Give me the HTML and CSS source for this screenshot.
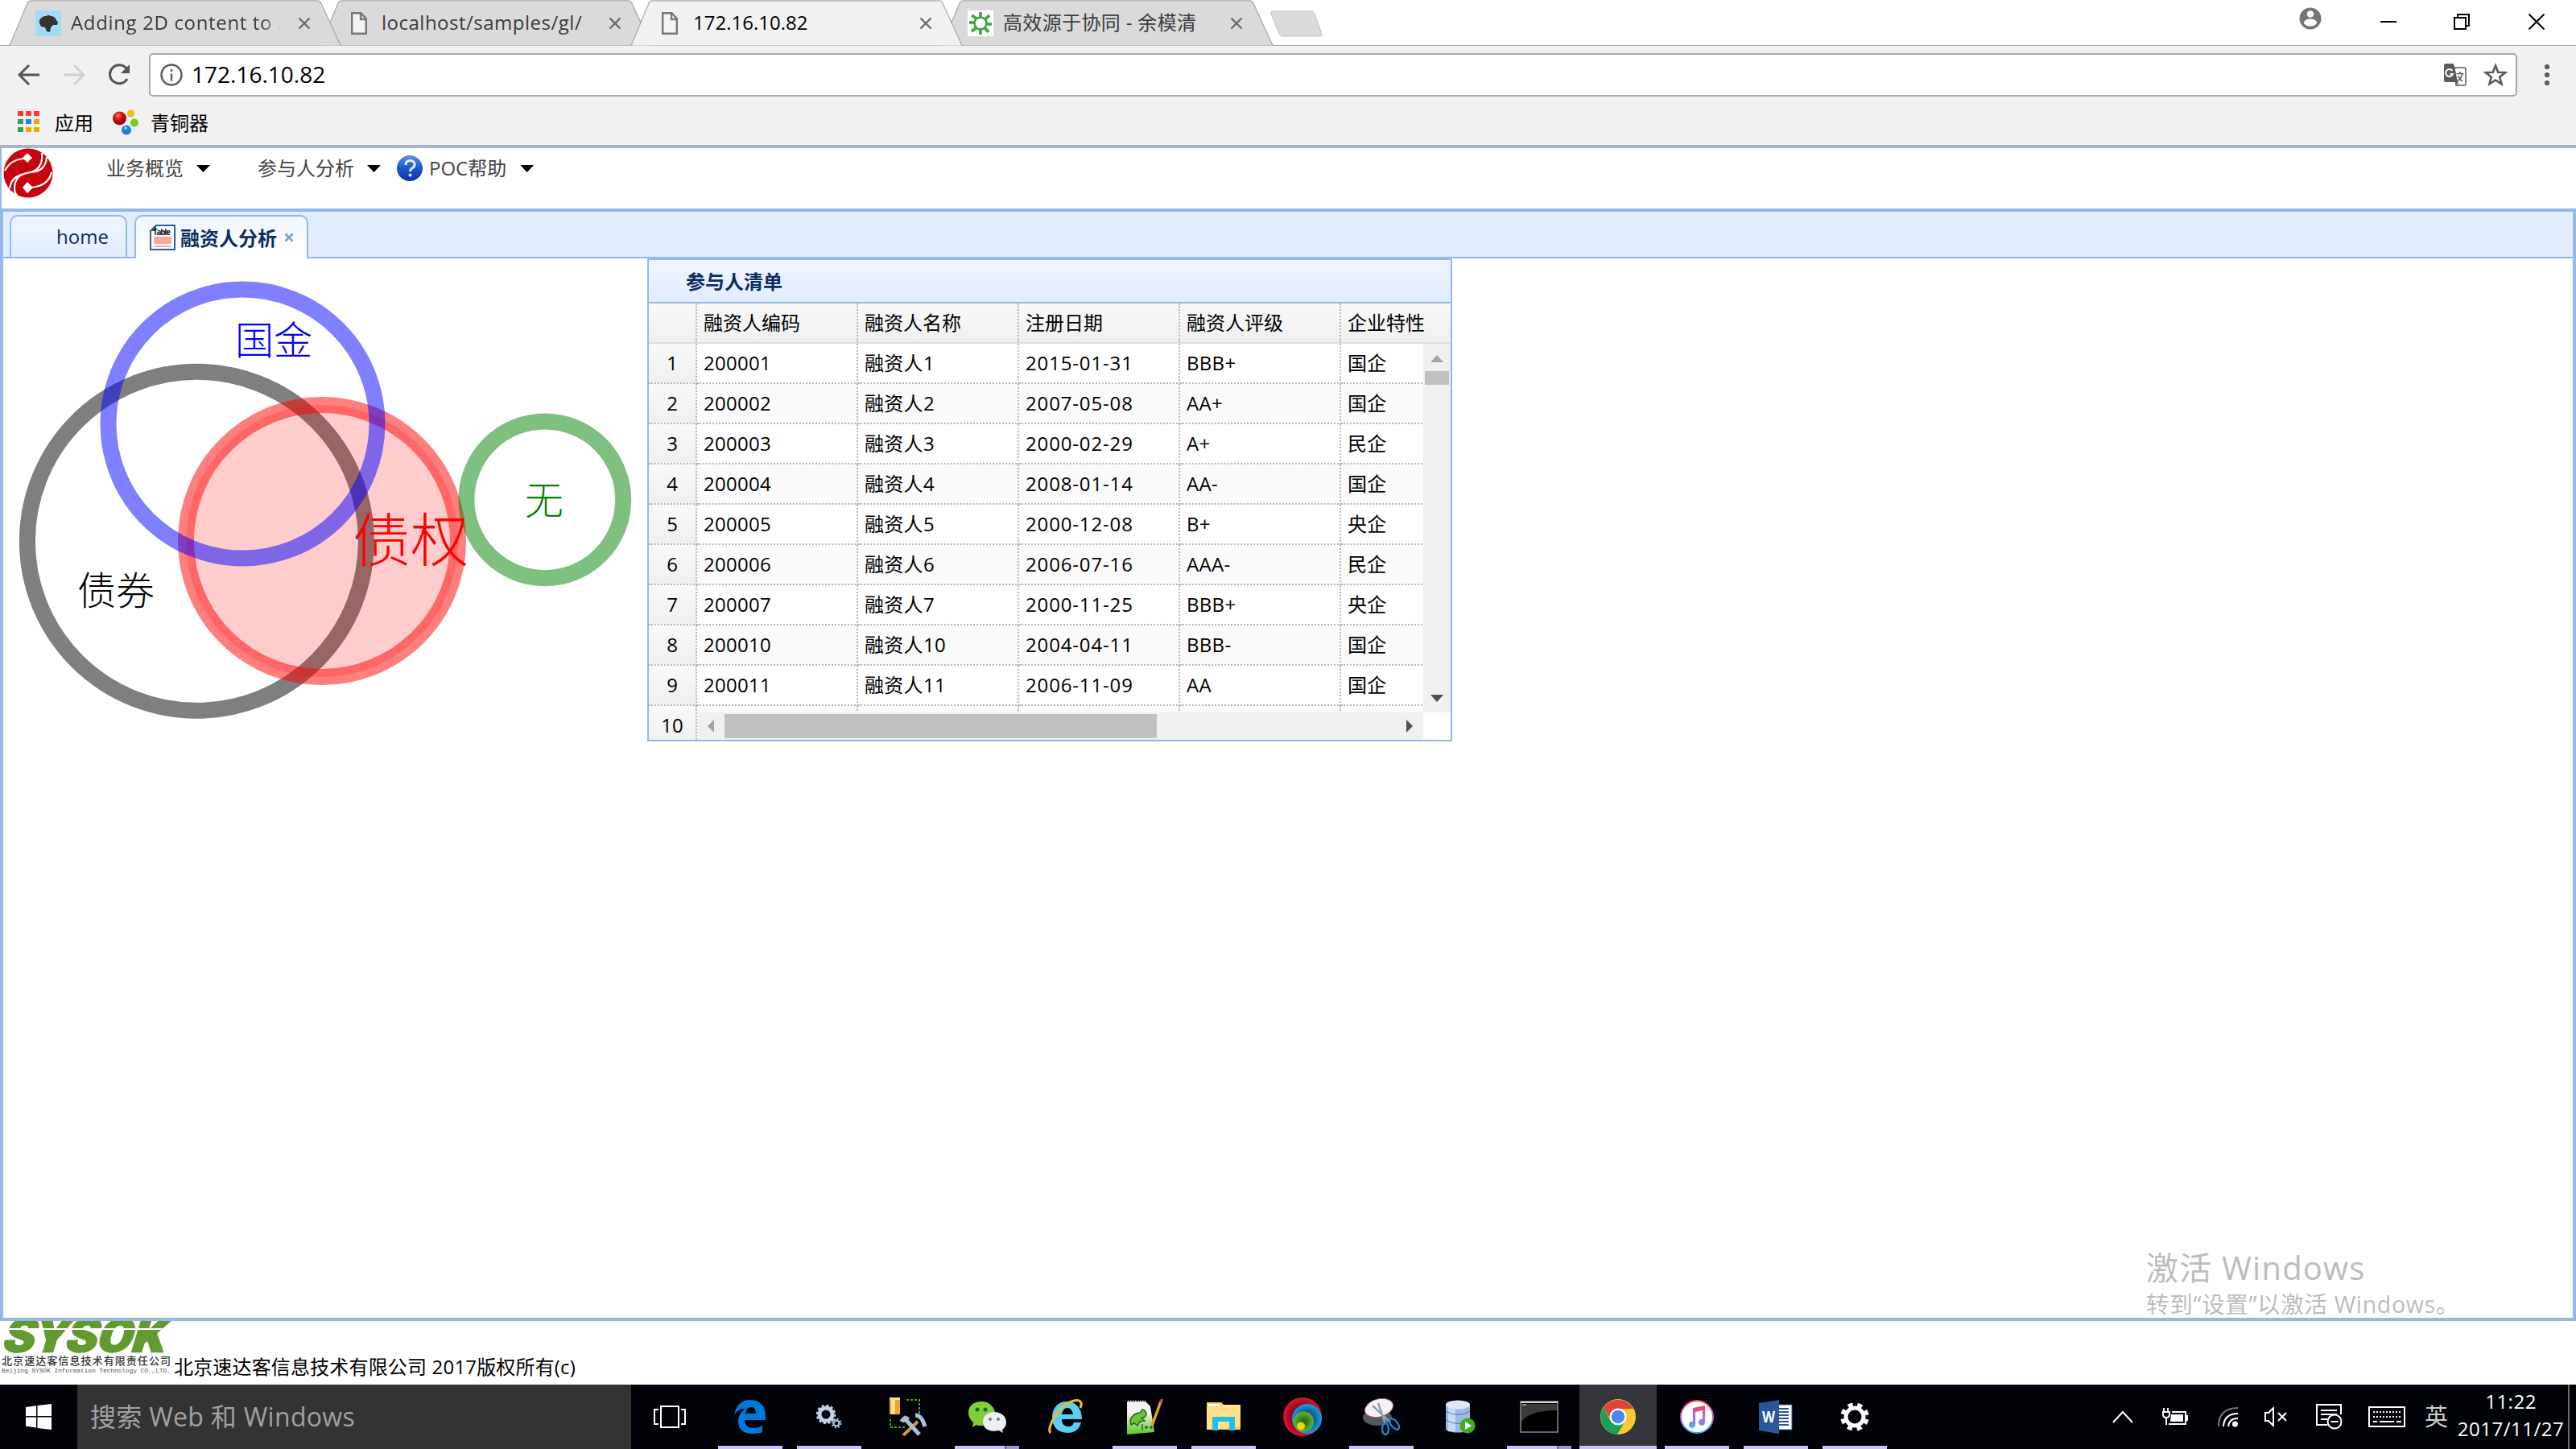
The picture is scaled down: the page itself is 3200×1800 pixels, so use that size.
FILE: index.html
```html
<!DOCTYPE html>
<html lang="zh-CN">
<head>
<meta charset="utf-8">
<title>172.16.10.82</title>
<link rel="stylesheet" href="styles.css">
</head>
<body>
<div class="screen">

<header class="browser">
  <div class="tabstrip">
    <div class="btab t1">
      <svg class="shape" viewBox="0 0 413 57"><path d="M0 56.500Q2 56 3 52L23 4Q24 .8 28 .8H383Q387 .8 388 4L410 52Q411 56 413 56.500"/></svg>
      <svg class="fav" viewBox="0 0 32 32"><path fill="#a3dbf5" d="M0 0h32v32H0z"/><path fill="#333" d="M5 12q3-5 8-5 3-2 6 0 5 0 7 5l2 3-1 3-5 0-3 3-1 6-4-1-2-5-5-1-2-4z"/></svg>
      <span class="bt fade">Adding 2D content to a</span>
      <svg class="x" viewBox="0 0 16 16"><path d="M1.500 1.500l13 13m0-13l-13 13"/></svg>
    </div>
    <div class="btab t2">
      <svg class="shape" viewBox="0 0 413 57"><path d="M0 56.500Q2 56 3 52L23 4Q24 .8 28 .8H383Q387 .8 388 4L410 52Q411 56 413 56.500"/></svg>
      <svg class="fav page" viewBox="0 0 20 28"><path d="M1.200 1.200h11.300l6.300 7v18.600H1.200zM12 1v8h7"/></svg>
      <span class="bt">localhost/samples/gl/</span>
      <svg class="x" viewBox="0 0 16 16"><path d="M1.500 1.500l13 13m0-13l-13 13"/></svg>
    </div>
    <div class="btab t3">
      <svg class="shape" viewBox="0 0 413 57"><path d="M0 56.500Q2 56 3 52L23 4Q24 .8 28 .8H383Q387 .8 388 4L410 52Q411 56 413 56.500"/></svg>
      <svg class="fav page" viewBox="0 0 20 28"><path d="M1.200 1.200h11.300l6.300 7v18.600H1.200zM12 1v8h7"/></svg>
      <span class="bt">172.16.10.82</span>
      <svg class="x" viewBox="0 0 16 16"><path d="M1.500 1.500l13 13m0-13l-13 13"/></svg>
    </div>
    <div class="btab t4">
      <svg class="shape" viewBox="0 0 413 57"><path d="M0 56.500Q2 56 3 52L23 4Q24 .8 28 .8H383Q387 .8 388 4L410 52Q411 56 413 56.500"/></svg>
      <svg class="fav" viewBox="0 0 32 32"><path fill="#fff" d="M0 0h32v32H0z"/><g stroke="#3aa637" stroke-width="3.600" fill="none"><circle cx="16" cy="16" r="7.500" stroke-width="2.500"/><path d="M16 10V2m5 10l6-6m-5 11h8m-9 4l5 6m-10-5v8m-5-9l-6 5m5-11H2m9-5L5 6"/></g></svg>
      <span class="bt">高效源于协同 - 余模清</span>
      <svg class="x" viewBox="0 0 16 16"><path d="M1.500 1.500l13 13m0-13l-13 13"/></svg>
    </div>
    <svg class="newtab" viewBox="0 0 68 34"><path d="M3 1h49q3 0 4 3l9 25q1 3-2 3H17q-4 0-5-3L2 4Q1 1 3 1z"/></svg>
    <div class="winbtns">
      <svg class="user" viewBox="0 0 28 28"><circle cx="14" cy="14" r="13.500" fill="#757575"/><circle cx="14" cy="8.500" r="4.200" fill="#fff"/><ellipse cx="14" cy="19" rx="8" ry="4.500" fill="#fff"/></svg>
      <svg class="min" viewBox="0 0 20 20"><path d="M0 10h20"/></svg>
      <svg class="max" viewBox="0 0 20 20"><path d="M1 5h14v14H1zM5 5V1h14v14h-4"/></svg>
      <svg class="cls" viewBox="0 0 20 20"><path d="M.5.5l19 19m0-19l-19 19"/></svg>
    </div>
  </div>
  <div class="toolbar">
    <svg class="nav" viewBox="0 0 28 28"><path d="M27 14H3M14 2L2 14l12 12"/></svg>
    <svg class="nav off" viewBox="0 0 28 28"><path d="M1 14h24M14 2l12 12-12 12"/></svg>
    <svg class="nav" viewBox="0 0 28 28"><path d="M24 19a11.500 11.500 0 1 1-1-13"/><path d="M27 1v11H16z" stroke="none" fill="#555"/></svg>
    <div class="url">
      <svg class="info" viewBox="0 0 28 28"><circle cx="14" cy="14" r="12.500"/><path d="M14 12.500v9M14 7v3"/></svg>
      <span>172.16.10.82</span>
      <svg class="trans" viewBox="0 0 28 28"><path fill="#fff" stroke="#5a5a5a" stroke-width="1.500" d="M13 5h12q2 0 2 2v18q0 2-2 2H15z"/><path fill="#5a5a5a" d="M2 0h9q1 0 1.500 1.500L18 27l-4-4H2q-2 0-2-2V2Q0 0 2 0z"/><path d="M10.500 9A4.500 4.500 0 1 0 11 13H7.500" fill="none" stroke="#fff" stroke-width="2"/><path d="M15.500 12.500h9M20 10v2.500m3 0q-1 5-6.500 9.500m1-7q2 5 5.500 7" fill="none" stroke="#5a5a5a" stroke-width="1.500"/></svg>
      <svg class="star" viewBox="0 0 30 30"><path d="M15 3.500l3.200 8.200 8.800.5-6.800 5.500 2.300 8.600-7.500-4.800-7.500 4.800 2.300-8.600L3 12.200l8.800-.5z"/></svg>
    </div>
    <svg class="dots" viewBox="0 0 8 28"><circle cx="4" cy="4" r="3.100"/><circle cx="4" cy="14" r="3.100"/><circle cx="4" cy="24" r="3.100"/></svg>
  </div>
  <div class="bookmarks">
    <svg class="apps" viewBox="0 0 27 27"><path fill="#f93b36" d="M0 0h7v6H0zM10 0h7v6h-7zM20 0h7v6h-7z"/><path fill="#2fa15b" d="M0 10h7v6H0zM0 20h7v6H0z"/><path fill="#1985f5" d="M10 10h7v6h-7z"/><path fill="#f3a402" d="M20 10h7v6h-7zM10 20h7v6h-7zM20 20h7v6h-7z"/></svg>
    <span>应用</span>
    <svg class="balls" viewBox="0 0 32 32"><defs><radialGradient id="br" cx=".4" cy=".3"><stop offset="0" stop-color="#ff8f80"/><stop offset=".5" stop-color="#e01818"/><stop offset="1" stop-color="#a00808"/></radialGradient></defs><circle cx="8.500" cy="11" r="8.500" fill="url(#br)"/><circle cx="22.500" cy="5" r="4.700" fill="#e8c51c"/><circle cx="27" cy="16.500" r="5" fill="#76c91c"/><circle cx="17" cy="25.500" r="6" fill="#1b7de0"/><circle cx="16" cy="23" r="2" fill="#8cc8ff"/></svg>
    <span>青铜器</span>
  </div>
</header>

<main class="app">
  <nav class="menu">
    <svg class="logo" viewBox="0 0 62 62"><circle cx="31" cy="31" r="30.500" fill="#c60410"/><g fill="none" stroke="#fff" stroke-width="2.200"><path d="M2 28Q10 13 28 13M8 50C10 36 20 33 30 31S50 24 48 6M60 30Q56 48 32 49M54 11C53 26 44 29 34 30S14 36 14 50Q14 56 18 60"/></g><path fill="#fff" d="M30 6l6 6-6 6-6-6zM30 42l7 7-7 7-6-7z"/></svg>
    <span class="mi m1">业务概览</span><i class="dn"></i>
    <span class="mi m2">参与人分析</span><i class="dn"></i>
    <svg class="help" viewBox="0 0 32 32"><defs><linearGradient id="hb" x2="0" y2="1"><stop offset="0" stop-color="#5b93e8"/><stop offset=".5" stop-color="#1c55cc"/><stop offset="1" stop-color="#0b37a0"/></linearGradient></defs><circle cx="16" cy="16" r="16" fill="url(#hb)"/><path d="M11 12q0-5.500 5.500-5.500T22 11.500q0 3-3 4.500-2.500 1.500-2.500 4" fill="none" stroke="#dfe9ff" stroke-width="3"/><circle cx="16.500" cy="24.500" r="2" fill="#dfe9ff"/></svg>
    <span class="mi">POC帮助</span><i class="dn"></i>
  </nav>

  <div class="tabs">
    <div class="tab"><span>home</span></div>
    <div class="tab on">
      <svg class="ticon" viewBox="0 0 32 32"><path fill="#fff" stroke="#27639a" stroke-width="2" d="M8 1h23v30H1V8z"/><path fill="#27639a" d="M1 8l7-7v7z"/><text x="4" y="13" textLength="22" font-size="10" font-weight="700" fill="#222">Table</text><path fill="#fba5a5" d="M5 15h22v9H5zM5 26h22v2H5z"/></svg>
      <span>融资人分析</span>
      <svg class="tx" viewBox="0 0 12 12"><path d="M1.500 1.500l9 9m0-9l-9 9"/></svg>
    </div>
  </div>

  <div class="content">
    <svg class="venn" viewBox="0 0 800 600">
      <g fill="none" stroke-width="20" stroke-opacity=".5">
        <circle cx="240.400" cy="351.300" r="210.500" stroke="#000"/>
        <circle cx="396" cy="351" r="169" stroke="red" fill="red" fill-opacity=".2"/>
        <circle cx="297.500" cy="205.500" r="167" stroke="#00f"/>
        <circle cx="672.800" cy="299.800" r="97.400" stroke="green"/>
      </g>
      <text x="288" y="119" font-size="48" fill="#00f">国金</text>
      <text x="92" y="430" font-size="48" fill="#000">债券</text>
      <text x="434" y="376" font-size="72" fill="red">债权</text>
      <text x="648" y="318" font-size="48" fill="green">无</text>
    </svg>

    <section class="panel">
      <h2>参与人清单</h2>
      <div class="row head"><b></b><span>融资人编码</span><span>融资人名称</span><span>注册日期</span><span>融资人评级</span><span>企业特性</span></div>
      <div class="grid">
        <div class="nums"><b>1</b><b>2</b><b>3</b><b>4</b><b>5</b><b>6</b><b>7</b><b>8</b><b>9</b><b>10</b></div>
        <div class="view">
          <div class="rows">
            <div class="row"><span>200001</span><span>融资人1</span><span>2015-01-31</span><span>BBB+</span><span>国企</span></div>
            <div class="row"><span>200002</span><span>融资人2</span><span>2007-05-08</span><span>AA+</span><span>国企</span></div>
            <div class="row"><span>200003</span><span>融资人3</span><span>2000-02-29</span><span>A+</span><span>民企</span></div>
            <div class="row"><span>200004</span><span>融资人4</span><span>2008-01-14</span><span>AA-</span><span>国企</span></div>
            <div class="row"><span>200005</span><span>融资人5</span><span>2000-12-08</span><span>B+</span><span>央企</span></div>
            <div class="row"><span>200006</span><span>融资人6</span><span>2006-07-16</span><span>AAA-</span><span>民企</span></div>
            <div class="row"><span>200007</span><span>融资人7</span><span>2000-11-25</span><span>BBB+</span><span>央企</span></div>
            <div class="row"><span>200010</span><span>融资人10</span><span>2004-04-11</span><span>BBB-</span><span>国企</span></div>
            <div class="row"><span>200011</span><span>融资人11</span><span>2006-11-09</span><span>AA</span><span>国企</span></div>
            <div class="row"><span></span><span></span><span></span><span></span><span></span></div>
          </div>
          <div class="hbar"><i class="al"></i><div class="hthumb"></div><i class="ar"></i></div>
        </div>
        <div class="vbar"><i class="au"></i><div class="vthumb"></div><i class="ad"></i></div>
      </div>
    </section>

    <div class="watermark"><p class="w1">激活 Windows</p><p class="w2">转到“设置”以激活 Windows。</p></div>
  </div>

  <footer class="foot">
    <svg class="sysok" viewBox="0 0 214 79">
      <g transform="translate(1 38) skewX(-17)"><text x="0" y="0" textLength="200" lengthAdjust="spacingAndGlyphs" font-size="57" font-weight="900" fill="#639a2f" stroke="#639a2f" stroke-width="2.500" class="brand">SYSOK</text></g>
      <path d="M0 10h214" stroke="#fff" stroke-width="2"/>
      <text x="2" y="54" font-size="13" font-weight="500" textLength="210" fill="#333">北京速达客信息技术有限责任公司</text>
      <text x="2" y="64" font-size="8" textLength="210" fill="#555" class="mono">Beijing SYSOK Information Technology CO.,LTD.</text>
    </svg>
    <span>北京速达客信息技术有限公司 2017版权所有(c)</span>
  </footer>
</main>

<div class="taskbar">
  <div class="start"><svg viewBox="0 0 32 32"><path fill="#fff" d="M0 4l13-1.800V15H0zM14.500 2L32 0v15H14.500zM0 16.500h13v13L0 27.500zM14.500 16.500H32V32l-17.500-2z"/></svg></div>
  <div class="search">搜索 Web 和 Windows</div>
  <div class="apps-row">
    <div class="tb tv"><svg width="40" height="28" viewBox="0 0 40 28" fill="none" stroke="#fff" stroke-width="2"><path d="M9 1h22v26H9zM6 5H1v18h5M34 5h5v18h-5"/></svg></div>
    <div class="tb run"><svg width="40" height="42" viewBox="0 0 40 42"><path fill="#0078d7" d="M0 19C2 7 9 0 20 0c13 0 19 9 19 19v6H13c0 7 5 10 11 10 4 0 8-1 11-3v8c-4 2-8 2-13 2C11 42 5 36 5 27c0-7 3-12 9-16C7 11 3 14 0 19zM14 17h13c0-5-2-8-6-8s-6 3-7 8z"/></svg></div>
    <div class="tb run"><svg width="32" height="30" viewBox="0 0 32 30" fill="none"><circle cx="12" cy="12" r="8" stroke="#c3d3e6" stroke-width="5"/><circle cx="12" cy="12" r="11" stroke="#c3d3e6" stroke-width="2.500" stroke-dasharray="3 2.760"/><circle cx="25" cy="23" r="3.500" stroke="#a8bdd6" stroke-width="2.500"/><circle cx="25" cy="23" r="5.500" stroke="#a8bdd6" stroke-width="2" stroke-dasharray="2 2.320"/></svg></div>
    <div class="tb"><svg width="48" height="48" viewBox="0 0 48 48" fill="none"><path fill="#e8a92c" d="M1 1h13v20H1z"/><path fill="#fde08a" d="M3 1h5v20H3zM1 0h13v3H1z"/><path d="M22 3h16v18M2 27v10h18" stroke="#3fa535" stroke-width="2" stroke-dasharray="3 2"/><path d="M36 30L18 47" stroke="#d99a2b" stroke-width="4"/><path d="M18 24l20 22" stroke="#aebfd6" stroke-width="5"/><path d="M15 27q5 4 9-3M33 22q8 0 12 14" stroke="#aebfd6" stroke-width="5"/></svg></div>
    <div class="tb run multi"><svg width="48" height="40" viewBox="0 0 48 40"><path fill="#7ecf38" d="M7 27C-3 19-1 1 17 1c11 0 17 8 17 15 0 9-7 15-17 15-3 0-4 0-6-1l-5 3z"/><circle cx="12" cy="11" r="2.500" fill="#1c6b18"/><circle cx="22" cy="11" r="2.500" fill="#1c6b18"/><path fill="#eef0f0" d="M33 14c8 0 15 5 15 13 0 4-2 7-5 9l1 4-5-3c-13 3-20-3-20-11 0-7 6-12 14-12z"/><circle cx="28" cy="23" r="2" fill="#777"/><circle cx="38" cy="23" r="2" fill="#777"/></svg></div>
    <div class="tb"><svg width="44" height="44" viewBox="0 0 44 44"><path fill="#5cd0f2" d="M5 23C5 11 12 3 23 3s19 8 19 22H17c0 6 3 9 8 9 4 0 6-2 7-5h9c-2 8-8 13-16 13C12 42 5 34 5 23zm12-4h14c-1-5-3-8-7-8s-6 3-7 8z"/><path d="M3 42C-3 36 14 6 32 2c8-2 11 2 8 9" fill="none" stroke="#f4b92c" stroke-width="3"/></svg></div>
    <div class="tb run"><svg width="48" height="44" viewBox="0 0 48 44"><defs><linearGradient id="np" x2="0" y2="1"><stop offset=".35" stop-color="#f2f2ee"/><stop offset="1" stop-color="#54c81e"/></linearGradient></defs><path fill="url(#np)" d="M2 3h23l6 6 5 32-34 3z"/><path d="M3 2h22" stroke="#777" stroke-width="2" stroke-dasharray="1.500 1.500"/><path fill="#6cc23a" stroke="#25661a" stroke-width="1.500" d="M6 26q4-9 12-9l3-4q5 1 5 6-1 4-6 5l4 3-6 1-3 5-4-3-4 2z"/><path fill="none" stroke="#25661a" stroke-width="1.500" d="M21 31v8m3-4h4m-2-2v4m4-2h4m-2-2v4"/><path d="M44 3L33 33" stroke="#e9a21f" stroke-width="3.500"/><path d="M45.500 0L44 5" stroke="#c84a3a" stroke-width="3.500"/></svg></div>
    <div class="tb run"><svg width="42" height="36" viewBox="0 0 42 36"><path fill="#f8cf57" d="M0 0h18l3 3h21v31H0z"/><path fill="#ffe08a" d="M0 6h16l3-3h23v27L0 34z"/><path fill="#fff" d="M2 2h14v3H2z"/><path fill="#20bdf0" d="M7 18h28v17h-7V24H14v11H7z"/></svg></div>
    <div class="tb"><svg width="48" height="48" viewBox="0 0 48 48"><defs><radialGradient id="r1" cx=".5" cy=".5"><stop offset=".6" stop-color="#8c0a1c"/><stop offset="1" stop-color="#e4122f"/></radialGradient><radialGradient id="r2"><stop offset=".5" stop-color="#0a5f94"/><stop offset="1" stop-color="#1a9be4"/></radialGradient><radialGradient id="r3"><stop offset=".2" stop-color="#2c6d12"/><stop offset="1" stop-color="#62b52e"/></radialGradient></defs><circle cx="24" cy="24" r="24" fill="url(#r1)"/><circle cx="29.500" cy="26.500" r="18.500" fill="url(#r2)"/><circle cx="25.500" cy="30" r="12.500" fill="url(#r3)"/><circle cx="22" cy="35.500" r="5" fill="#f3d40c"/></svg></div>
    <div class="tb run"><svg width="48" height="46" viewBox="0 0 48 46"><ellipse cx="19" cy="24" rx="18" ry="10" fill="#55585e"/><ellipse cx="21" cy="12" rx="18" ry="11" fill="#f2f2f8" stroke="#b45050" transform="rotate(-15 21 12)"/><path d="M13 9l22 21M20 6l9 26" stroke="#9aa0a8" stroke-width="2.500"/><g fill="none" stroke="#1a86c9" stroke-width="2.500"><ellipse cx="29" cy="38" rx="4" ry="7"/><ellipse cx="40" cy="32" rx="4" ry="8" transform="rotate(-40 40 32)"/></g></svg></div>
    <div class="tb"><svg width="38" height="42" viewBox="0 0 38 42"><path fill="#9db9e4" d="M1 5v31c0 6 30 6 30 0V5z"/><path fill="#c9daf3" d="M4 6h9v33H4z"/><ellipse cx="16" cy="6" rx="15" ry="5.500" fill="#dce8f8"/><path fill="none" stroke="#5676a8" d="M1 14q15 9 30 0M1 25q15 9 30 0"/><circle cx="28" cy="32" r="9.500" fill="#41ac1c"/><path fill="#fff" d="M25 27l8 5-8 5z"/></svg></div>
    <div class="tb run multi"><svg width="48" height="40" viewBox="0 0 48 40"><path fill="#000" stroke="#8b8b8b" stroke-width="1.500" d="M1 1h46v38H1z"/><path fill="#d8d8d8" d="M1 1h46v2H1z"/><path fill="#3a3a3a" d="M2 4h44v8Q12 12 2 26z"/><path d="M3 5h5" stroke="#ddd"/></svg></div>
    <div class="tb active"><svg width="44" height="44" viewBox="0 0 44 44"><circle cx="22" cy="22" r="22" fill="#fcc934"/><path fill="#db4437" d="M4 10A22 22 0 0 1 41 12H22L12 24z"/><path fill="#1da05a" d="M4 10A22 22 0 0 0 21 44L31 27 22 22 12 26z"/><circle cx="22" cy="22" r="10.500" fill="#fff"/><circle cx="22" cy="22" r="8.300" fill="#4a89f3"/></svg></div>
    <div class="tb run"><svg width="42" height="42" viewBox="0 0 42 42"><defs><linearGradient id="it" x2="0" y2="1"><stop offset="0" stop-color="#fa4058"/><stop offset=".55" stop-color="#b565ea"/><stop offset="1" stop-color="#28b6f8"/></linearGradient></defs><circle cx="21" cy="21" r="20" fill="#fff" stroke="url(#it)" stroke-width="2"/><path fill="url(#it)" d="M16 10l15-3v21a4 4 0 1 1-3-4V13l-9 2v16a4 4 0 1 1-3-4z"/></svg></div>
    <div class="tb run"><svg width="42" height="42" viewBox="0 0 42 42"><path fill="#fff" stroke="#2b579a" d="M20 6h21v31H20z"/><path stroke="#2b579a" stroke-width="2" d="M24 11h13M24 15h13M24 19h13M24 23h13M24 27h13M24 31h13"/><path fill="#2b579a" d="M0 4l25-4v42L0 38z"/><text x="4" y="28" font-size="19" font-weight="700" fill="#fff" textLength="16" lengthAdjust="spacingAndGlyphs">W</text></svg></div>
    <div class="tb run"><svg width="36" height="36" viewBox="0 0 36 36" fill="none" stroke="#fff"><circle cx="18" cy="18" r="11" stroke-width="5"/><circle cx="18" cy="18" r="15.200" stroke-width="5" stroke-dasharray="6 5.940" stroke-dashoffset="-3"/></svg></div>
  </div>
  <div class="tray">
    <svg width="26" height="16" viewBox="0 0 26 16"><path d="M1 15L13 2l12 13"/></svg>
    <svg width="33" height="24" viewBox="0 0 33 24"><path d="M13 6h17v15H9M32 10v7M6 14v8M3 1v4m5-4v4M2 6h8v3q0 4-4 4t-4-4z"/><path d="M12 9h15v9H11z" fill="#fff" stroke="none"/></svg>
    <svg width="26" height="26" viewBox="0 0 26 26"><path d="M1 25Q1 2 25 2" stroke="#777"/><path d="M7 25Q8 9 25 9M13 25q1-10 12-10"/><circle cx="21.500" cy="22" r="3.500" fill="#fff" stroke="none"/></svg>
    <svg width="29" height="24" viewBox="0 0 29 24"><path d="M1 7h4l6-6v22l-6-6H1zM17 7l10 10m0-10L17 17"/></svg>
    <svg width="33" height="32" viewBox="0 0 33 32"><path d="M14 26H1V1h30v12M6 8h20M6 13h20M6 19h8"/><circle cx="23" cy="22" r="8.500"/><path d="M18.500 22h9"/></svg>
    <svg width="46" height="26" viewBox="0 0 46 26"><path d="M1 1h44v24H1z"/><path d="M6 7h35M6 13h35" stroke-dasharray="2 2"/><path d="M6 19h5m3 0h18m3 0h6"/></svg>
    <span class="ime">英</span>
    <div class="clock"><span>11:22</span><span>2017/11/27</span></div>
    <i class="peek"></i>
  </div>
</div>
</div>
</body>
</html>
```
FILE: styles.css
```css
* { box-sizing: border-box; }
body { margin: 0; background: #fff; }
.screen {
  width: 3200px; height: 1800px; overflow: hidden;
  display: flex; flex-direction: column;
  font-family: "Open Sans", "Noto Sans CJK SC", sans-serif;
  font-size: 24px; color: #000;
}
svg { display: block; flex: none; }
span { white-space: nowrap; }

/* browser chrome */
.browser { height: 182px; background: #f1f1f1; border-bottom: 2px solid #b2b2b2; flex: none; }
.tabstrip { height: 57px; display: flex; align-items: flex-start; background: #fff; border-bottom: 1px solid #a8a8a8; padding-left: 11px; }
.btab { position: relative; width: 413px; height: 57px; margin-right: -27px; display: flex; align-items: center; flex: none; padding-left: 33px; color: #3c3c3c; }
.shape { position: absolute; left: 0; top: 0; width: 413px; height: 57px; fill: #dadada; stroke: #a9a9a9; stroke-width: 1.2; }
.t1 { z-index: 3; }
.t2 { z-index: 2; padding-left: 39px; }
.t3 { z-index: 5; padding-left: 39px; color: #000; }
.t4 { z-index: 1; }
.t3 .shape { fill: #f1f1f1; }
.fav { position: relative; width: 32px; height: 32px; }
.fav.page { width: 20px; height: 28px; fill: #f4f4f4; stroke: #777; stroke-width: 2.4; margin-right: 7px; }
.bt { position: relative; margin-left: 12px; width: 278px; overflow: hidden; line-height: 34px; margin-top: -2px; letter-spacing: .35px; }
.t2 .bt { margin-left: 11px; letter-spacing: .5px; }
.t3 .bt { letter-spacing: 0; }
.t1 .fade { width: 264px; letter-spacing: .65px; -webkit-mask-image: linear-gradient(90deg, #000 90%, transparent 99%); mask-image: linear-gradient(90deg, #000 90%, transparent 99%); }
.x { position: absolute; left: 359px; top: 21px; width: 16px; height: 16px; stroke: #6a6a6a; stroke-width: 2.4; fill: none; }
.newtab { width: 68px; height: 34px; margin: 13px 0 0 22px; fill: #dadada; stroke: #c4c4c4; }
.winbtns { display: flex; margin-left: auto; align-items: flex-start; padding-right: 39px; }
.winbtns .user { width: 28px; height: 28px; margin: 9px 73px 0 0; }
.min, .max, .cls { width: 20px; height: 20px; margin-top: 17px; fill: none; stroke: #000; stroke-width: 2; }
.min { margin-right: 71px; }
.max { margin-right: 73px; }
.toolbar { height: 71px; display: flex; align-items: center; padding: 0 0 0 22px; }
.nav { width: 28px; height: 28px; margin-right: 28px; margin-top: 1px; fill: none; stroke: #555; stroke-width: 3; }
.nav.off { stroke: #d0d0d0; }
.url { width: 2942px; height: 54px; margin-top: 1px; margin-left: -5px; border: 2px solid #a9a9a9; border-radius: 5px; background: #fff; display: flex; align-items: center; padding: 0 10px 0 12px; font-size: 28px; }
.info { width: 28px; height: 28px; fill: none; stroke: #5a5a5a; stroke-width: 2.4; margin-right: 11px; }
.url span { margin-top: -3px; }
.trans { width: 28px; height: 28px; margin-left: auto; margin-right: 21px; }
.star { width: 30px; height: 30px; fill: none; stroke: #5a5a5a; stroke-width: 2.6; }
.dots { width: 8px; height: 28px; margin-left: 33px; fill: #5a5a5a; }
.bookmarks { height: 52px; display: flex; align-items: center; padding: 0 0 6px 22px; }
.apps { width: 27px; height: 27px; margin-right: 19px; }
.balls { width: 32px; height: 32px; margin: 2px 15px 0 24px; }
.bookmarks span { line-height: 30px; margin-top: 3px; }

/* application shell */
.app { height: 1538px; flex: none; display: flex; flex-direction: column; }
.menu { height: 77px; flex: none; border-top: 2px solid #95b8e7; border-left: 2px solid #95b8e7; display: flex; align-items: flex-start; color: #444; }
.logo { width: 62px; height: 62px; margin-left: 2px; }
.mi { line-height: 50px; }
.m1 { margin-left: 66px; }
.m2 { margin-left: 59px; }
.dn { width: 17px; height: 9px; margin: 21px 0 0 16px; background: #000; clip-path: polygon(0 0, 100% 0, 50% 100%); }
.help { width: 32px; height: 32px; margin: 9px 8px 0 20px; }
.menu .help + .mi + .dn { margin-left: 17px; }

.tabs { height: 62px; flex: none; background: #e0ecff; border-top: 4px solid #95b8e7; border-left: 4px solid #95b8e7; border-right: 4px solid #95b8e7; display: flex; align-items: flex-end; gap: 9px; padding-left: 8px; box-shadow: inset 0 -2px #95b8e7; }
.tab { height: 54px; border: 2px solid #95b8e7; border-radius: 10px 10px 0 0; background: linear-gradient(#eff5ff, #e0ecff); color: #0e2d5f; width: 146px; display: flex; align-items: center; padding-left: 56px; }
.tab span { margin-top: -2px; }
.tab.on { width: 216px; padding-left: 17px; background: linear-gradient(#eff5ff, #fff); border-bottom: 0; font-weight: 700; }
.ticon { width: 32px; height: 32px; margin-right: 6px; }
.tx { width: 12px; height: 12px; margin-left: 9px; stroke: #7f9fcb; stroke-width: 2.6; }
.content { height: 1320px; flex: none; border: solid #95b8e7; border-width: 0 4px 4px; display: flex; align-items: flex-start; position: relative; }
.venn { width: 800px; height: 600px; font-family: "Noto Sans CJK SC", sans-serif; font-weight: 300; }

.panel { width: 1000px; height: 600px; border: 2px solid #95b8e7; overflow: hidden; }
.panel h2 { margin: 0; height: 54px; border-bottom: 2px solid #95b8e7; background: linear-gradient(#eff5ff, #e0ecff); color: #0e2d5f; font-size: 24px; line-height: 53px; padding-left: 46px; }
.row { display: flex; height: 50px; width: 1060px; }
.row span { width: 200px; flex: none; line-height: 48px; padding-left: 8px; border-right: 2px dotted #b8b8b8; border-bottom: 2px dotted #b8b8b8; letter-spacing: .3px; }
.row span:nth-child(3) { letter-spacing: .85px; }
.row:nth-child(even) { background: #fafafa; }
.head.row { background: linear-gradient(#f9f9f9, #efefef); border-bottom: 2px solid #ddd; }
.head.row span { letter-spacing: 0; border-bottom: 0; }
.head b { width: 60px; border-right: 2px dotted #b8b8b8; flex: none; }
.grid { display: flex; height: 492px; }
.nums { width: 60px; flex: none; background: #f4f4f4; }
.nums b { display: block; height: 50px; line-height: 48px; text-align: center; font-weight: 400; border-right: 2px dotted #b8b8b8; border-bottom: 2px dotted #b8b8b8; background: linear-gradient(#f9f9f9, #efefef); }
.view { width: 902px; flex: none; }
.rows { height: 458px; overflow: hidden; }
.hbar { height: 34px; background: #f0f0f0; display: flex; align-items: center; }
.hthumb { width: 537px; height: 30px; background: #c1c1c1; }
.al, .ar { width: 8px; height: 16px; }
.al { background: #a3a3a3; clip-path: polygon(100% 0, 100% 100%, 0 50%); margin: 0 13px; }
.ar { background: #505050; clip-path: polygon(0 0, 100% 50%, 0 100%); margin: 0 13px 0 auto; }
.vbar { width: 34px; height: 458px; background: #f0f0f0; display: flex; flex-direction: column; align-items: center; }
.vthumb { width: 30px; height: 17px; background: #c1c1c1; }
.au, .ad { width: 16px; height: 9px; }
.au { background: #a3a3a3; clip-path: polygon(50% 0, 100% 100%, 0 100%); margin: 14px 0 11px; }
.ad { background: #505050; clip-path: polygon(0 0, 100% 0, 50% 100%); margin: auto 0 13px; }

.watermark { position: absolute; left: 2662px; top: 1224px; color: #bcbcbc; }
.watermark p { margin: 0; white-space: nowrap; }
.w1 { font-size: 40px; line-height: 60px; letter-spacing: 1.2px; }
.w2 { font-size: 28.5px; line-height: 30px; letter-spacing: .7px; }

.foot { height: 79px; display: flex; }
.sysok { width: 214px; height: 79px; overflow: hidden; }
.brand { font-family: Roboto, sans-serif; }
.mono { font-family: "Liberation Mono", monospace; }
.foot span { line-height: 34px; margin: 40px 0 0 2px; letter-spacing: .17px; }

/* taskbar */
.taskbar { height: 80px; background: #010308; display: flex; flex: none; color: #fff; }
.start { width: 96px; padding: 24px 32px; }
.start svg { width: 32px; height: 32px; }
.search { width: 688px; background: #333; color: #a0a0a0; font-size: 32px; line-height: 79px; padding-left: 16px; white-space: nowrap; letter-spacing: .3px; }
.apps-row { display: flex; gap: 2px; }
.tb { position: relative; width: 96px; height: 80px; display: flex; align-items: center; justify-content: center; }
.tb.tv { width: 98px; padding-right: 2px; }
.tb.run::after { content: ""; position: absolute; left: 8px; right: 8px; bottom: 0; height: 4px; background: #c9c3f7; }
.tb.multi::after { background: linear-gradient(90deg, #c9c3f7 62px, #706c94 62px, #706c94 64px, #9d98c4 64px); }
.tb.active { background: #34363b; border-bottom: 4px solid #c9c3f7; padding-top: 4px; }
.tray { margin-left: auto; display: flex; align-items: center; width: 576px; }
.tray svg { fill: none; stroke: #fff; stroke-width: 2; margin-right: 32px; }
.tray svg:nth-child(1) { margin-right: 35px; }
.tray svg:nth-child(2) { margin-right: 37px; }
.tray svg:nth-child(4) { margin-right: 35px; }
.tray svg:nth-child(6) { margin-right: 24px; }
.ime { font-size: 29px; line-height: 76px; color: #ccc; margin-right: 11px; }
.clock { width: 134px; display: flex; flex-direction: column; align-items: center; line-height: 34px; letter-spacing: .5px; margin-top: -4px; }
.peek { width: 2px; height: 80px; background: #6a6a6a; margin-left: auto; margin-right: 8px; }
```
